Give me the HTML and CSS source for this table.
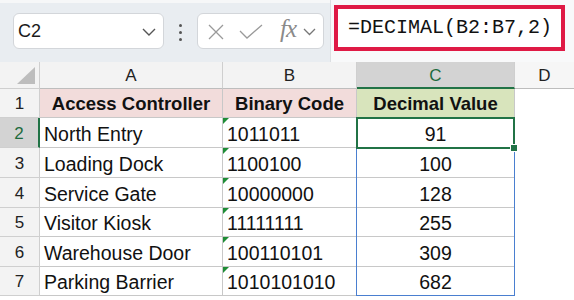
FILE: index.html
```html
<!DOCTYPE html>
<html>
<head>
<meta charset="utf-8">
<link rel="stylesheet" href="styles.css">
</head>
<body>
<div class="app">
  <div class="toolbar">
    <div class="namebox">
      <span class="nb-text">C2</span>
      <svg class="chev" width="14" height="8" viewBox="0 0 14 8"><path d="M1 1 L7 7 L13 1" fill="none" stroke="#555" stroke-width="1.4"/></svg>
    </div>
    <div class="dots"><i></i><i></i><i></i></div>
    <div class="fnbox">
      <svg class="ico-x" width="16" height="16" viewBox="0 0 16 16"><path d="M1 1 L15 15 M15 1 L1 15" stroke="#9a9a9a" stroke-width="1.3" fill="none"/></svg>
      <svg class="ico-check" width="24" height="15" viewBox="0 0 24 15"><path d="M1 7 L8 14 L23 1" stroke="#9a9a9a" stroke-width="1.3" fill="none"/></svg>
      <span class="fx">fx</span>
      <svg class="chev2" width="13" height="8" viewBox="0 0 13 8"><path d="M1 1 L6.5 6.5 L12 1" fill="none" stroke="#777" stroke-width="1.3"/></svg>
    </div>
    <div class="formula">
      <div class="formula-box">=DECIMAL(B2:B7,2)</div>
    </div>
  </div>
  <div class="sheet">
    <div class="corner"><span class="tri"></span></div>
    <div class="colhead">A</div>
    <div class="colhead">B</div>
    <div class="colhead sel">C</div>
    <div class="colhead d">D</div>

    <div class="rowhead">1</div>
    <div class="cell hdr pink">Access Controller</div>
    <div class="cell hdr pink">Binary Code</div>
    <div class="cell hdr green">Decimal Value</div>
    <div class="blank"></div>

    <div class="rowhead sel">2</div>
    <div class="cell">North Entry</div>
    <div class="cell txt">1011011</div>
    <div class="cell num active">91<span class="spill"></span><span class="selection"></span><span class="handle"></span></div>
    <div class="blank"></div>

    <div class="rowhead">3</div>
    <div class="cell">Loading Dock</div>
    <div class="cell txt">1100100</div>
    <div class="cell num">100</div>
    <div class="blank"></div>

    <div class="rowhead">4</div>
    <div class="cell">Service Gate</div>
    <div class="cell txt">10000000</div>
    <div class="cell num">128</div>
    <div class="blank"></div>

    <div class="rowhead">5</div>
    <div class="cell">Visitor Kiosk</div>
    <div class="cell txt">11111111</div>
    <div class="cell num">255</div>
    <div class="blank"></div>

    <div class="rowhead">6</div>
    <div class="cell">Warehouse Door</div>
    <div class="cell txt">100110101</div>
    <div class="cell num">309</div>
    <div class="blank"></div>

    <div class="rowhead">7</div>
    <div class="cell">Parking Barrier</div>
    <div class="cell txt">1010101010</div>
    <div class="cell num">682</div>
    <div class="blank"></div>
  </div>
</div>
</body>
</html>
```
FILE: styles.css
```css
* { box-sizing: border-box; }
html, body { margin: 0; padding: 0; }
body { width: 574px; height: 300px; overflow: hidden; background: #fff; font-family: "Liberation Sans", Arial, sans-serif; }

.toolbar {
  display: flex;
  height: 62px;
  background: #e9edf1;
  border-top: 3px solid #f6f7f8;
}
.namebox {
  margin: 10px 0 0 13px;
  width: 151px;
  height: 36px;
  background: #fff;
  border: 1px solid #d3d6da;
  border-radius: 6px;
  display: flex;
  align-items: center;
  justify-content: space-between;
  padding: 0 7px 0 4px;
}
.nb-text { font-size: 18px; color: #1a1a1a; }
.chev { margin-top: 2px; }
.dots {
  margin: 21px 0 0 15px;
  width: 3px;
  display: flex;
  flex-direction: column;
  gap: 4px;
}
.dots i { display: block; width: 3px; height: 3px; border-radius: 50%; background: #555; }
.fnbox {
  margin: 10px 0 0 15px;
  width: 127px;
  height: 36px;
  background: #fff;
  border: 1px solid #d3d6da;
  border-radius: 6px;
  display: flex;
  align-items: center;
  padding-left: 10px;
}
.ico-x { margin-top: 1px; }
.ico-check { margin-left: 15px; }
.fx {
  margin-left: 17px;
  font-family: "Liberation Serif", serif;
  font-style: italic;
  font-size: 25px;
  color: #8a8a8a;
  margin-top: -4px;
  letter-spacing: -1px;
}
.chev2 { margin-left: 7px; margin-top: 2px; }
.formula {
  flex: 1;
  margin-left: 6px;
  margin-top: -3px;
  background: #f8f9fa;
  border-left: 1px solid #dcdfe2;
  padding: 5px 9px 0 3px;
}
.formula-box {
  height: 46px;
  border: 4px solid #df1a45;
  background: #fff;
  font-family: "Liberation Mono", "DejaVu Sans Mono", monospace;
  font-size: 20px;
  color: #111;
  padding: 7px 0 0 10px;
}

.sheet {
  display: grid;
  grid-template-columns: 40px 183px 134px 158px 59px;
  grid-template-rows: 27px 29px 30px 30px 30px 29px 30px 29px;
}
.corner {
  background: #f3f3f3;
  border-right: 1px solid #cfcfcf;
  border-bottom: 1px solid #cfcfcf;
  position: relative;
}
.tri {
  position: absolute;
  right: 4px;
  bottom: 4px;
  width: 0; height: 0;
  border-left: 18px solid transparent;
  border-bottom: 17px solid #bdbdbd;
}
.colhead {
  background: #f3f3f3;
  border-right: 1px solid #cfcfcf;
  border-bottom: 1px solid #bdbdbd;
  font-size: 17px;
  color: #222;
  display: flex;
  align-items: center;
  justify-content: center;
  padding-top: 1px;
}
.colhead.sel { background: #d3d3d3; color: #1e6b3d; border-bottom: 2px solid #217346; padding-top: 2px; }
.colhead.d { background: #f6f6f6; border-right: none; }
.rowhead {
  background: #f3f3f3;
  border-right: 1px solid #cfcfcf;
  border-bottom: 1px solid #cfcfcf;
  font-size: 17px;
  color: #222;
  display: flex;
  align-items: center;
  justify-content: center;
  padding-top: 2px;
}
.rowhead.sel { background: #d3d3d3; color: #1e6b3d; border-right: 2px solid #217346; }
.cell {
  border-right: 1px solid #c8c8c8;
  border-bottom: 1px solid #c8c8c8;
  font-size: 19.5px;
  color: #111;
  display: flex;
  align-items: flex-end;
  line-height: 22px;
  padding: 0 0 2px 4px;
  white-space: nowrap;
  position: relative;
}
.cell.hdr { font-weight: bold; justify-content: center; padding-left: 0; font-size: 18.5px; }
.pink { background: #f2dcdb; }
.green { background: #d8e4bc; }
.cell.num { justify-content: center; padding-left: 0; }
.cell.active { z-index: 3; }
.cell.txt::before {
  content: "";
  position: absolute;
  left: 0; top: 0;
  width: 0; height: 0;
  border-top: 6px solid #1e8c36;
  border-right: 6px solid transparent;
}
.blank { background: #fff; }

.spill {
  position: absolute;
  left: -1px;
  top: 0;
  width: 159px;
  height: 178px;
  border: 1px solid #4a7fd0;
  border-top: none;
}
.selection {
  position: absolute;
  left: -1px;
  top: -1px;
  width: 159px;
  height: 32px;
  border: 2px solid #217346;
}
.handle {
  position: absolute;
  left: 153px;
  top: 26px;
  width: 8px;
  height: 8px;
  background: #217346;
  border: 1px solid #fff;
}
```
